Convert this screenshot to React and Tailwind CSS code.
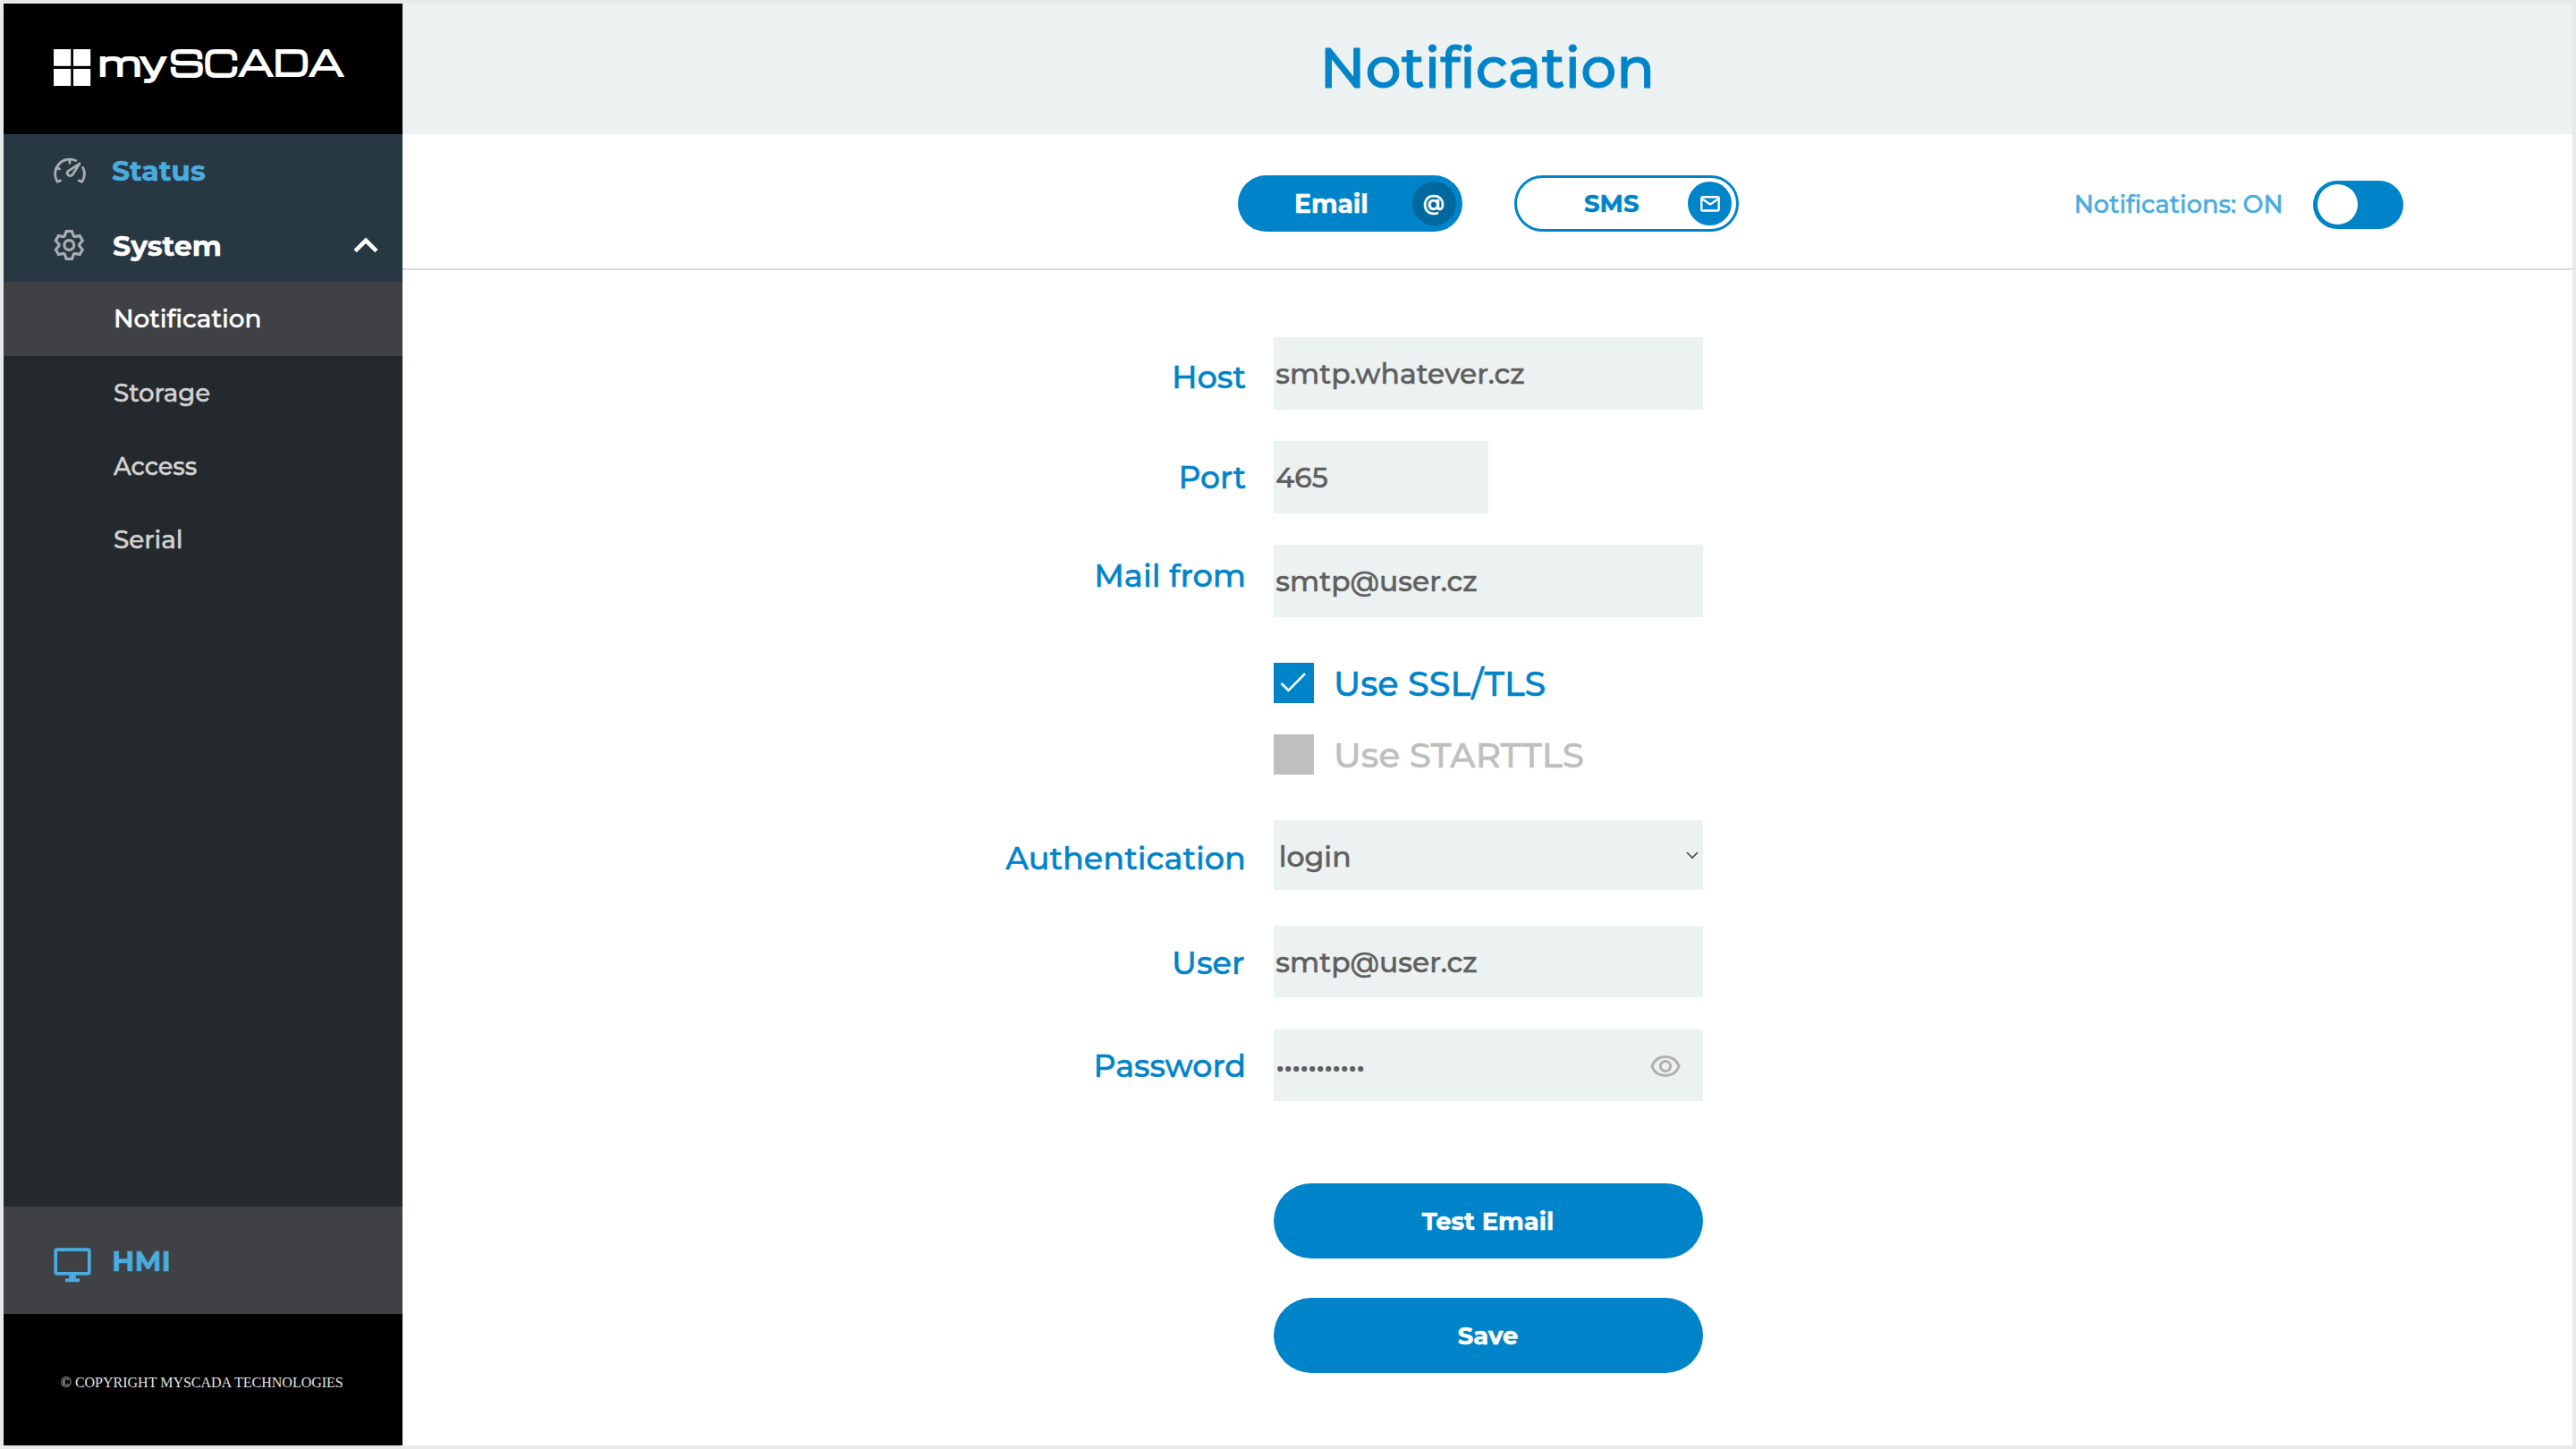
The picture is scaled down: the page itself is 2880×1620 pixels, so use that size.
import React from "react";

const submenu = [
  { label: "Notification", size: "text-[27.8px] text-white bg-[#3f4145]" },
  { label: "Storage", size: "text-[27.6px] text-[#d2d2d2]" },
  { label: "Access", size: "text-[26.9px] text-[#d2d2d2]" },
  { label: "Serial", size: "text-[27.8px] text-[#d2d2d2]" },
];

function Logo() {
  return (
    <svg width="332" height="56" viewBox="60 48 332 56" fill="#fff" aria-label="mySCADA" className="overflow-visible">
      <rect x="60" y="55" width="19.2" height="18.8" />
      <rect x="82" y="55" width="19.2" height="18.8" />
      <rect x="60" y="77" width="19.2" height="19" />
      <rect x="82" y="77" width="19.2" height="19" />
      <g stroke="#fff" className="font-[Michroma,Montserrat,Inter,sans-serif]">
        <text x="110.5" y="85" fontSize="36" strokeWidth="2.2" textLength="76" lengthAdjust="spacingAndGlyphs">my</text>
        <text x="189.5" y="85" fontSize="38.5" strokeWidth="2.2" textLength="195" lengthAdjust="spacingAndGlyphs">SCADA</text>
      </g>
    </svg>
  );
}

function GaugeIcon() {
  return (
    <svg width="37" height="30" viewBox="60 177 37 30" fill="none" stroke="#a7adb2" strokeWidth="2.8" strokeLinecap="round" strokeLinejoin="round">
      <path d="M67.6 202.9 L64.2 204.3 A16.4 16.4 0 0 1 84.7 180.5" />
      <path d="M92.7 188.4 A16.4 16.4 0 0 1 91.7 204.3 L88.3 202.9" />
      <path d="M77.9 180 V183.3 M63 188.8 L66.6 189.9" />
      <path d="M89 183.8 L81.2 196.2 A3.4 3.4 0 0 1 75.4 192.8 Z" />
    </svg>
  );
}

// Outline of a six-toothed gear centred on the origin
const gearPoints = [0, 60, 120, 180, 240, 300]
  .flatMap((deg) => {
    const a = (deg * Math.PI) / 180;
    return [[-5, -10.2], [-3.1, -15.5], [3.1, -15.5], [5, -10.2]].map(([x, y]) => [
      x * Math.cos(a) - y * Math.sin(a),
      x * Math.sin(a) + y * Math.cos(a),
    ]);
  })
  .map(([x, y]) => `${x.toFixed(2)},${y.toFixed(2)}`)
  .join(" ");

function GearIcon() {
  return (
    <svg width="36" height="36" viewBox="-17.3 -18 36 36" fill="none" stroke="#a7adb2" strokeWidth="3.2" strokeLinejoin="miter">
      <polygon points={gearPoints} />
      <circle r="5.4" />
    </svg>
  );
}

function MonitorIcon() {
  return (
    <svg width="42" height="39" viewBox="60 1395 42 39" fill="none" stroke="#49acdf" strokeWidth="3.8">
      <rect x="62.2" y="1397.2" width="37.6" height="26.6" rx="1.5" />
      <path d="M81 1425 V1430" strokeWidth="7.6" />
      <path d="M73 1431.3 H89" />
    </svg>
  );
}

function Sidebar() {
  return (
    <aside className="flex w-[445.5px] shrink-0 flex-col bg-[#24292d]">
      <div className="h-[146px] bg-black pt-11 pl-14">
        <Logo />
      </div>
      <div className="flex h-[82.5px] items-center bg-[#283842] pl-14">
        <span className="w-[65px] shrink-0"><GaugeIcon /></span>
        <span className="text-[31.5px] font-bold text-[#49acdf]">Status</span>
      </div>
      <div className="flex h-[82.5px] items-center bg-[#283842] pr-[26px] pl-14">
        <span className="w-[66px] shrink-0"><GearIcon /></span>
        <span className="grow pt-[1px] text-[31.6px] font-bold text-white">System</span>
        <svg width="30" height="20" viewBox="393.5 264 30 20" fill="none" stroke="#fff" strokeWidth="4.6">
          <path d="M396.6 280.7 L408.5 268.8 L420.4 280.7" />
        </svg>
      </div>
      {submenu.map((item) => (
        <div key={item.label} className={`flex h-[82.5px] items-center pt-[1px] pl-[123px] font-medium ${item.size}`}>
          {item.label}
        </div>
      ))}
      <div className="mt-auto flex h-[120px] items-center bg-[#3f4145] pt-[3px] pl-14">
        <span className="w-[65px] shrink-0 pt-[8px]"><MonitorIcon /></span>
        <span className="text-[31.5px] font-bold text-[#49acdf]">HMI</span>
      </div>
      <div className="flex h-[147px] items-center justify-center bg-black pt-[7px] pr-[2px] font-['Liberation_Serif',serif] text-[16px] text-[#e4e4e4] [-webkit-text-stroke:0px]">
        © COPYRIGHT MYSCADA TECHNOLOGIES
      </div>
    </aside>
  );
}

function Toolbar() {
  return (
    <div className="grid h-[152px] grid-cols-[1fr_auto_1fr] items-center border-b-2 border-[#d9dada] pt-[5px]">
      <div />
      <div className="flex gap-[57.5px] pl-[2px] text-[28.2px] font-bold">
        <button className="flex h-[63px] w-[251px] items-center justify-between rounded-full bg-[#0084c9] pr-[7.5px] pl-[63px] text-white">
          <span className="pt-[1px]">Email</span>
          <span className="flex h-[49px] w-[49px] items-center justify-center rounded-full bg-[#00689f] pb-[1px] text-[23px] font-semibold">@</span>
        </button>
        <button className="flex h-[63px] w-[251px] items-center justify-between rounded-full border-[3px] border-[#0084c9] pr-[4.5px] pl-[75.5px] text-[27.6px] text-[#0084c9]">
          <span className="pt-[1px]">SMS</span>
          <span className="flex h-[49px] w-[49px] items-center justify-center rounded-full bg-[#0084c9]">
            <svg width="22" height="18" viewBox="0 0 22 18" fill="none" stroke="#fff" strokeWidth="2.4" strokeLinejoin="round">
              <rect x="1.3" y="1.3" width="19.4" height="15.2" rx="1.2" />
              <path d="M2.2 3.6 L11 9.4 L19.8 3.6" />
            </svg>
          </span>
        </button>
      </div>
      <div className="flex items-center justify-end pt-[2px] pr-[189.5px]">
        <span className="mr-[33.5px] pt-[1px] text-[27.2px] font-medium text-[#49acdf]">Notifications: ON</span>
        <span className="flex h-[54px] w-[100.5px] items-center rounded-full bg-[#0084c9] pl-[5px]">
          <span className="h-[45px] w-[45px] rounded-full bg-white" />
        </span>
      </div>
    </div>
  );
}

function Row({ label, labelClass, className = "", children }) {
  return (
    <div className={`flex items-center ${className}`}>
      <div className={`w-[943.5px] text-right leading-none font-medium text-[#0084c9] ${labelClass}`}>{label}</div>
      <div className="ml-[30.5px]">{children}</div>
    </div>
  );
}

function Field({ className = "w-[480px]", children }) {
  return (
    <div className={`flex h-[80.5px] items-center bg-[#ecf1f1] pt-[3px] pl-[2.8px] text-[31.4px] font-medium text-[#5f5f5f] ${className}`}>
      {children}
    </div>
  );
}

function Form() {
  return (
    <form className="flex flex-col pt-[75px]">
      <Row label="Host" labelClass="pt-[8px] text-[35.2px]">
        <Field>smtp.whatever.cz</Field>
      </Row>
      <Row label="Port" labelClass="pt-[2px] text-[34.6px]" className="mt-[35.5px]">
        <Field className="w-[240px]">465</Field>
      </Row>
      <Row label="Mail from" labelClass="pb-[11px] text-[35.2px]" className="mt-[35.5px]">
        <Field>smtp@user.cz</Field>
      </Row>

      <div className="mt-[51px] ml-[974px] flex h-[45px] items-center text-[38.2px] font-medium text-[#0084c9]">
        <span className="mr-[22.5px] flex h-[45px] w-[45px] items-center justify-center bg-[#0084c9]">
          <svg width="32" height="24" viewBox="0 0 32 24" fill="none" stroke="#fff" strokeWidth="2.6">
            <path d="M2.5 13 L10.5 20.8 L29 2.2" />
          </svg>
        </span>
        <span className="pt-[3px]">Use SSL/TLS</span>
      </div>
      <div className="mt-[35px] ml-[974px] flex h-[45px] items-center text-[39px] font-medium text-[#bfbfbf]">
        <span className="mr-[22.5px] h-[45px] w-[45px] bg-[#bfbfbf]" />
        <span className="pt-[3px]">Use STARTTLS</span>
      </div>

      <Row label="Authentication" labelClass="pt-[9px] text-[35.1px]" className="mt-[51px]">
        <div className="flex h-[78px] w-[480px] items-center justify-between bg-[#ecf1f1] pt-[5px] pr-[5px] pl-[6.2px] text-[31.6px] font-medium text-[#5f5f5f]">
          login
          <svg width="14" height="10" viewBox="0 0 14 10" fill="none" stroke="#4c4c4c" strokeWidth="1.7" className="mb-[5px]">
            <path d="M1 2 L7 8 L13 2" />
          </svg>
        </div>
      </Row>
      <Row label="User" labelClass="pt-[3px] pr-[1.5px] text-[35.2px]" className="mt-[40px]">
        <Field>smtp@user.cz</Field>
      </Row>
      <Row label="Password" labelClass="pt-[4px] text-[34.8px]" className="mt-[35.5px]">
        <Field className="w-[480px] justify-between pr-[25px]">
          <span className="pt-[2px] tracking-[-0.85px]">•••••••••••</span>
          <svg width="34" height="26" viewBox="0 0 34 26" fill="none" stroke="#b0b0b0" strokeWidth="3">
            <path d="M1.8 13 C4.4 6.2 10.2 2.4 17 2.4 C23.8 2.4 29.6 6.2 32.2 13 C29.6 19.8 23.8 23.6 17 23.6 C10.2 23.6 4.4 19.8 1.8 13 Z" />
            <circle cx="17" cy="13" r="5.6" />
          </svg>
        </Field>
      </Row>

      <div className="mt-[92px] ml-[974px] flex w-[480px] flex-col gap-11 text-[27.4px] font-bold text-white">
        <button type="button" className="h-[84px] rounded-full bg-[#0084c9] pt-[1px]">Test Email</button>
        <button type="button" className="h-[84px] rounded-full bg-[#0084c9] pt-[1px]">Save</button>
      </div>
    </form>
  );
}

export default function App() {
  return (
    <div className="flex h-[1620px] w-[2880px] overflow-hidden border-4 border-[#e8e9e9] bg-white font-[Montserrat,Inter,sans-serif] [-webkit-text-stroke:0.5px]">
      <Sidebar />
      <main className="grow">
        <h1 className="flex h-[146px] items-center justify-center bg-[#ecf1f1] pb-[1px] text-[63px] font-medium text-[#0084c9] [-webkit-text-stroke:1px]">
          Notification
        </h1>
        <Toolbar />
        <Form />
      </main>
    </div>
  );
}
